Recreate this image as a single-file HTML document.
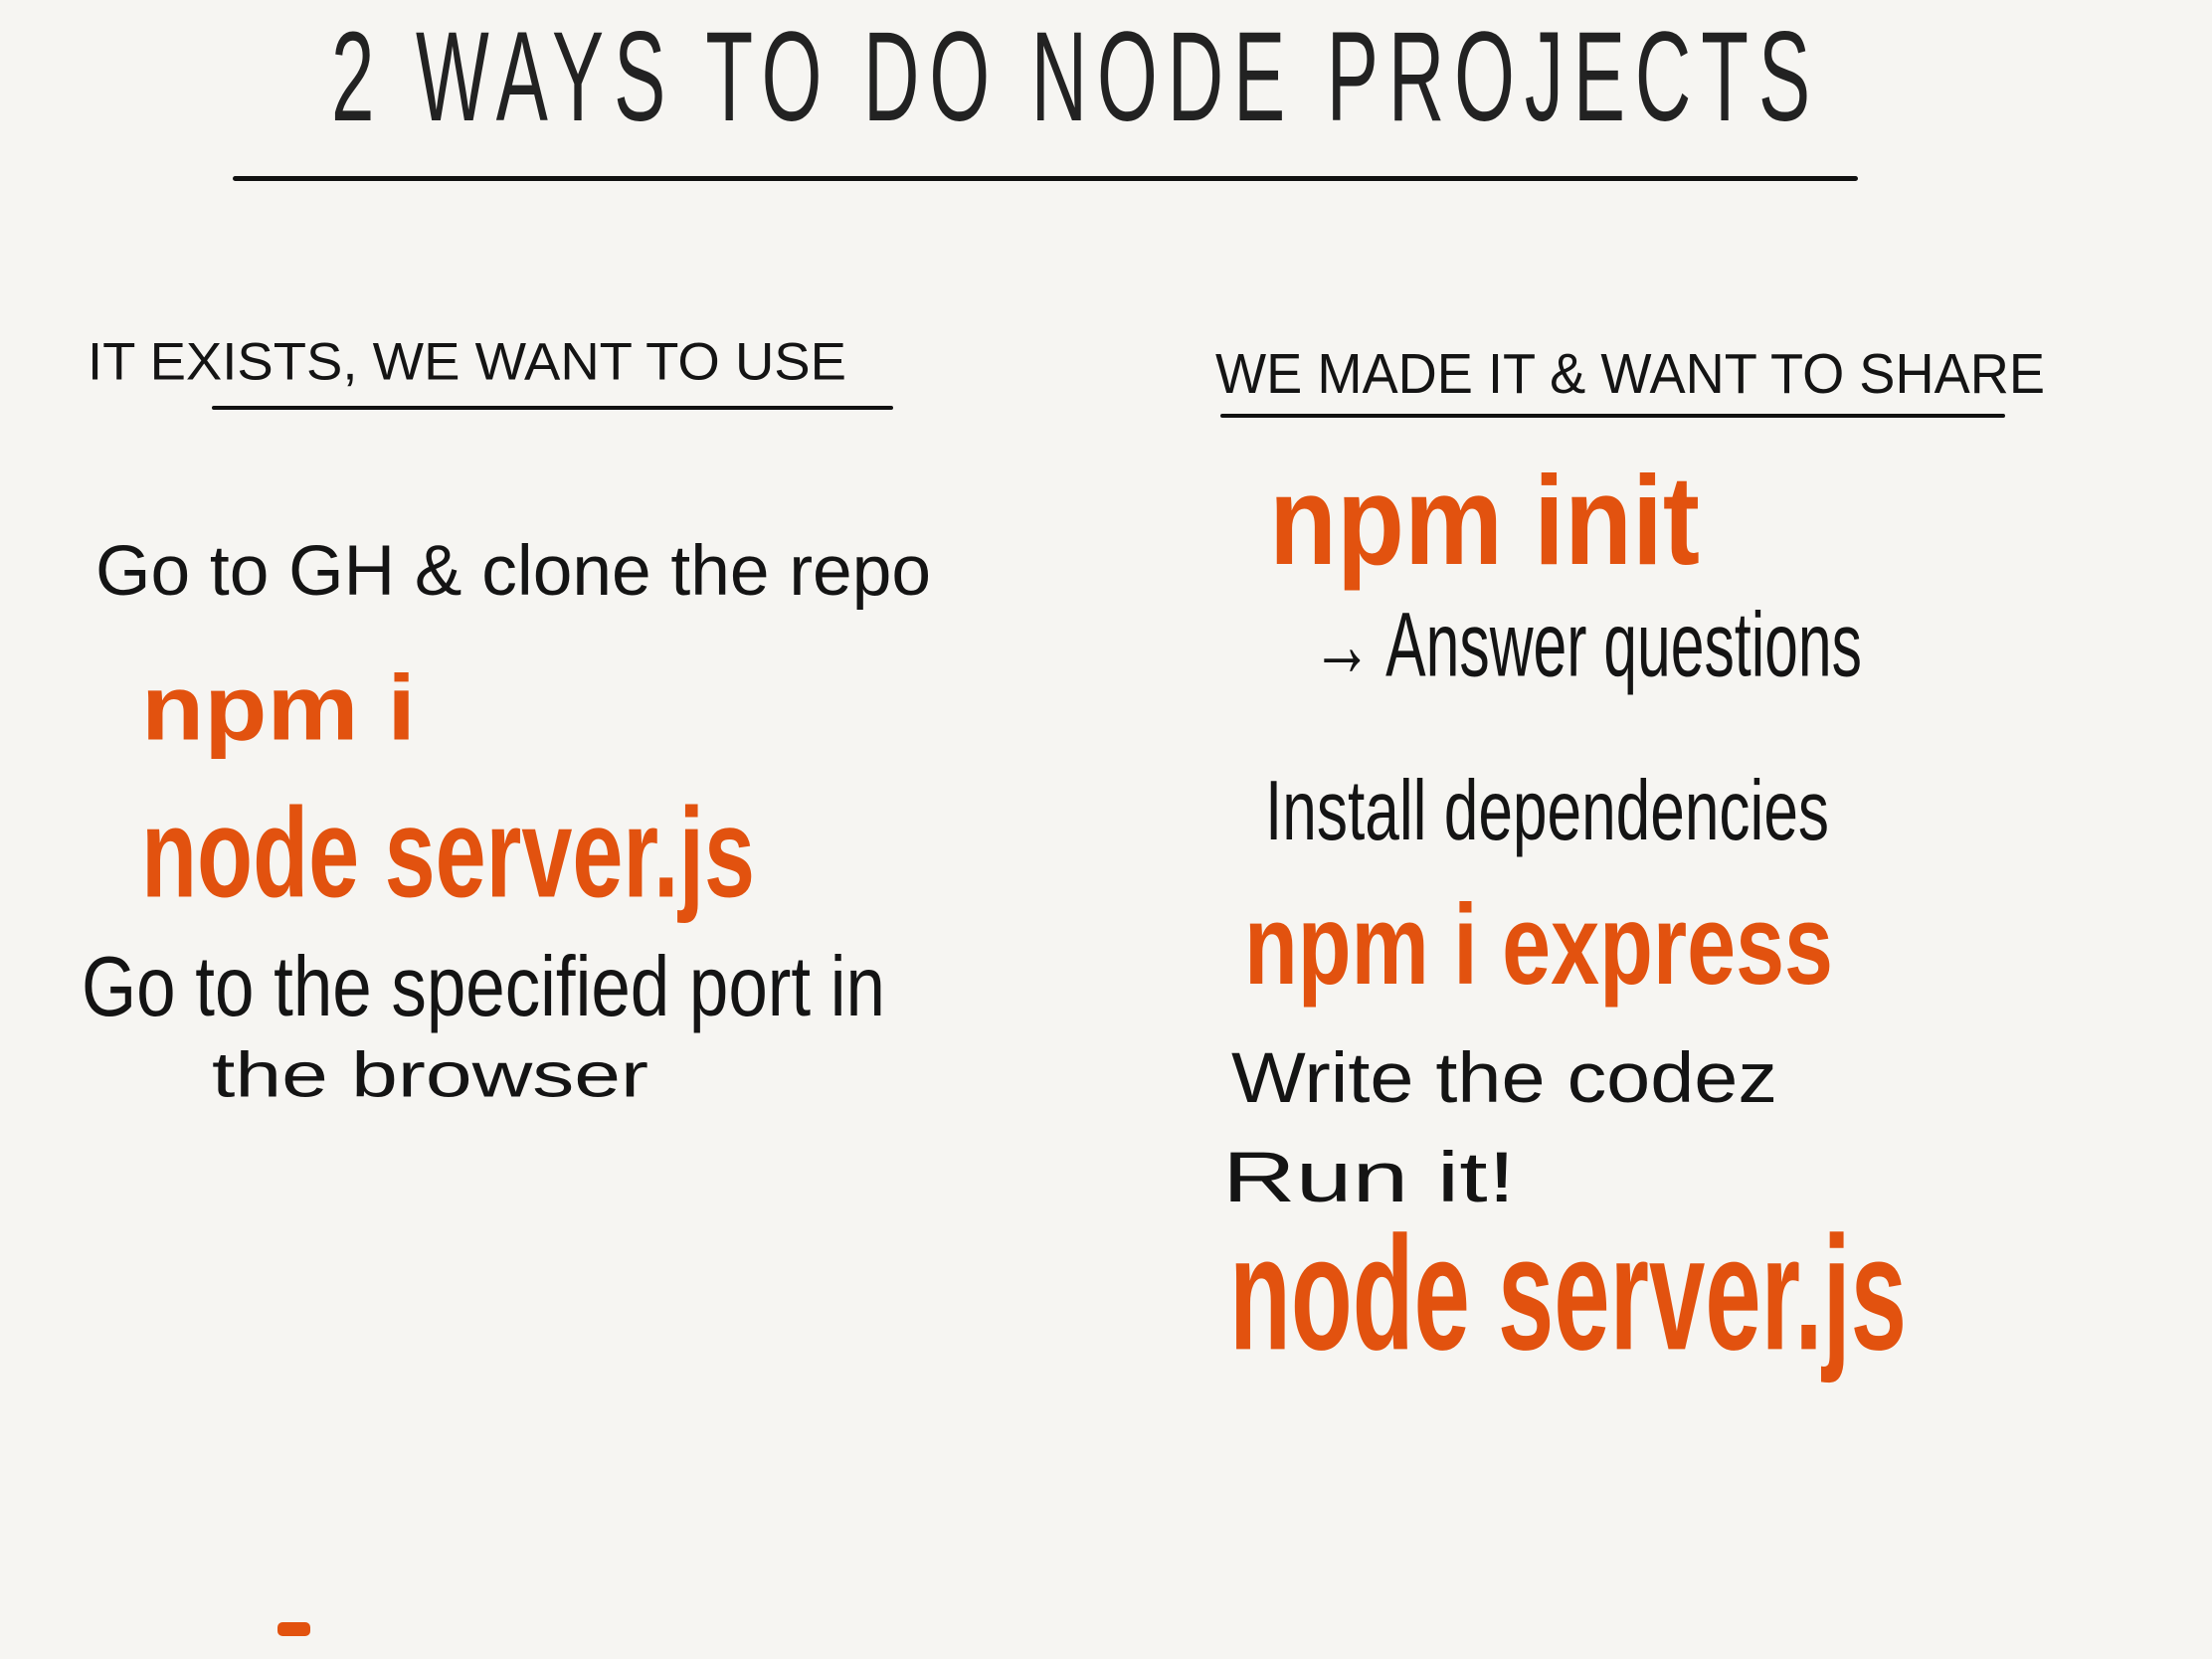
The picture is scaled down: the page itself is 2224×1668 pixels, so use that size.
<!DOCTYPE html>
<html><head><meta charset="utf-8">
<style>
html,body{margin:0;padding:0;background:#f6f5f2;}
body{width:2224px;height:1668px;position:relative;overflow:hidden;font-family:"Liberation Sans",sans-serif;}
.t{position:absolute;white-space:nowrap;}
.t span{display:inline-block;transform-origin:0 0;line-height:1;}
.k{color:#141414;font-weight:normal;}
.o{color:#e2520f;font-weight:bold;}
.line{position:absolute;background:#111;height:5px;border-radius:3px;}
</style></head><body>
<div class="t k" style="left:333px;top:14px;width:1497px;height:128px;"><span style="font-size:110px;letter-spacing:14px;color:#222;">2 WAYS TO DO NODE PROJECTS</span></div>
<div class="line" style="left:234px;top:177px;width:1634px;"></div>

<div class="t k" style="left:88px;top:337px;width:763px;height:53px;"><span style="font-size:50px;">IT EXISTS, WE WANT TO USE</span></div>
<div class="line" style="left:213px;top:408px;width:685px;height:4px;"></div>
<div class="t k" style="left:1222px;top:347px;width:834px;height:57px;"><span style="font-size:50px;">WE MADE IT &amp; WANT TO SHARE</span></div>
<div class="line" style="left:1227px;top:416px;width:789px;height:4px;"></div>

<div class="t k" style="left:96px;top:539px;width:840px;height:71px;"><span style="font-size:60px;">Go to GH &amp; clone the repo</span></div>
<div class="t o" style="left:142px;top:666px;width:276px;height:93px;"><span style="font-size:90px;">npm i</span></div>
<div class="t o" style="left:142px;top:794px;width:617px;height:128px;"><span style="font-size:100px;">node server.js</span></div>
<div class="t k" style="left:82px;top:950px;width:808px;height:85px;"><span style="font-size:60px;">Go to the specified port in</span></div>
<div class="t k" style="left:213px;top:1049px;width:439px;height:64px;"><span style="font-size:60px;">the browser</span></div>
<div style="position:absolute;left:279px;top:1631px;width:33px;height:14px;background:#e2520f;border-radius:5px;"></div>

<div class="t o" style="left:1276px;top:461px;width:433px;height:127px;"><span style="font-size:110px;">npm init</span></div>
<div class="t k" style="left:1319px;top:603px;width:553px;height:92px;"><span style="font-size:60px;">→ Answer questions</span></div>
<div class="t k" style="left:1272px;top:773px;width:567px;height:85px;"><span style="font-size:60px;">Install dependencies</span></div>
<div class="t o" style="left:1251px;top:893px;width:592px;height:114px;"><span style="font-size:100px;">npm i express</span></div>
<div class="t k" style="left:1238px;top:1049px;width:549px;height:71px;"><span style="font-size:60px;">Write the codez</span></div>
<div class="t k" style="left:1229px;top:1149px;width:295px;height:71px;"><span style="font-size:60px;">Run it!</span></div>
<div class="t o" style="left:1236px;top:1220px;width:681px;height:163px;"><span style="font-size:110px;">node server.js</span></div>

<script>
document.querySelectorAll('.t').forEach(function(d){
  var s=d.firstElementChild;
  var w=parseFloat(d.style.width),h=parseFloat(d.style.height);
  var r=s.getBoundingClientRect();
  s.style.transform='scale('+(w/r.width)+','+(h/r.height)+')';
});
</script>
</body></html>
